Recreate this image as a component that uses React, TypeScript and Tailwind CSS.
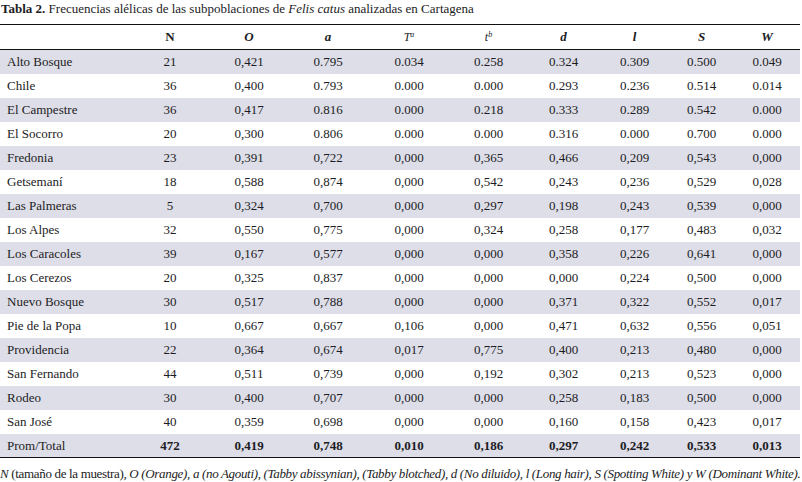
const rows: string[][] = [
  ["Alto Bosque", "21", "0,421", "0.795", "0.034", "0.258", "0.324", "0.309", "0.500", "0.049"],
  ["Chile", "36", "0,400", "0.793", "0.000", "0.000", "0.293", "0.236", "0.514", "0.014"],
  ["El Campestre", "36", "0,417", "0.816", "0.000", "0.218", "0.333", "0.289", "0.542", "0.000"],
  ["El Socorro", "20", "0,300", "0.806", "0.000", "0.000", "0.316", "0.000", "0.700", "0.000"],
  ["Fredonia", "23", "0,391", "0,722", "0,000", "0,365", "0,466", "0,209", "0,543", "0,000"],
  ["Getsemaní", "18", "0,588", "0,874", "0,000", "0,542", "0,243", "0,236", "0,529", "0,028"],
  ["Las Palmeras", "5", "0,324", "0,700", "0,000", "0,297", "0,198", "0,243", "0,539", "0,000"],
  ["Los Alpes", "32", "0,550", "0,775", "0,000", "0,324", "0,258", "0,177", "0,483", "0,032"],
  ["Los Caracoles", "39", "0,167", "0,577", "0,000", "0,000", "0,358", "0,226", "0,641", "0,000"],
  ["Los Cerezos", "20", "0,325", "0,837", "0,000", "0,000", "0,000", "0,224", "0,500", "0,000"],
  ["Nuevo Bosque", "30", "0,517", "0,788", "0,000", "0,000", "0,371", "0,322", "0,552", "0,017"],
  ["Pie de la Popa", "10", "0,667", "0,667", "0,106", "0,000", "0,471", "0,632", "0,556", "0,051"],
  ["Providencia", "22", "0,364", "0,674", "0,017", "0,775", "0,400", "0,213", "0,480", "0,000"],
  ["San Fernando", "44", "0,511", "0,739", "0,000", "0,192", "0,302", "0,213", "0,523", "0,000"],
  ["Rodeo", "30", "0,400", "0,707", "0,000", "0,000", "0,258", "0,183", "0,500", "0,000"],
  ["San José", "40", "0,359", "0,698", "0,000", "0,000", "0,160", "0,158", "0,423", "0,017"],
];

const total = ["Prom/Total", "472", "0,419", "0,748", "0,010", "0,186", "0,297", "0,242", "0,533", "0,013"];

const serif = "font-['Liberation_Serif',serif] text-[13px] text-[#1c1c24]";

export default function App() {
  return (
    <div className={"w-[802px] h-[482px] bg-white overflow-hidden " + serif}>
      <div className="h-[24px] leading-[18px] pl-[1px]">
        <span className="font-bold">Tabla 2.</span> Frecuencias alélicas de las subpoblaciones de{" "}
        <i>Felis catus</i> analizadas en Cartagena
      </div>
      <table className={"table-fixed w-[800px] border-collapse " + serif}>
        <colgroup>
          <col className="w-[130px]" />
          <col className="w-[80px]" />
          <col className="w-[78px]" />
          <col className="w-[80px]" />
          <col className="w-[82px]" />
          <col className="w-[77px]" />
          <col className="w-[73px]" />
          <col className="w-[69px]" />
          <col className="w-[65px]" />
          <col className="w-[66px]" />
        </colgroup>
        <thead>
          <tr className="h-[25px] border-t border-b border-[#111]">
            <th></th>
            <th className="font-bold text-center">N</th>
            <th className="font-bold italic text-center">O</th>
            <th className="font-bold italic text-center">a</th>
            <th className="font-normal italic text-center text-[12px]">
              T<sup className="text-[8px]">a</sup>
            </th>
            <th className="font-normal italic text-center text-[12px]">
              t<sup className="text-[8px]">b</sup>
            </th>
            <th className="font-bold italic text-center">d</th>
            <th className="font-bold italic text-center">l</th>
            <th className="font-bold italic text-center">S</th>
            <th className="font-bold italic text-center">W</th>
          </tr>
        </thead>
        <tbody>
          {rows.map((r, i) => (
            <tr key={r[0]} className={i % 2 === 0 ? "h-[24px] bg-[#dedee8]" : "h-[24px] bg-white"}>
              {r.map((c, j) => (
                <td key={j} className={j === 0 ? "pl-[7px] text-left" : "text-center"}>
                  {c}
                </td>
              ))}
            </tr>
          ))}
          <tr className="h-[24px] bg-[#dedee8] border-b border-[#111]">
            {total.map((c, j) => (
              <td key={j} className={j === 0 ? "pl-[7px] text-left" : "text-center font-bold"}>
                {c}
              </td>
            ))}
          </tr>
        </tbody>
      </table>
      <div className="mt-[6px] text-[13px] italic tracking-[-0.33px] whitespace-nowrap">
        N <span className="not-italic">(tamaño de la muestra)</span>, O (Orange), a (no Agouti),  (Tabby abissynian),  (Tabby blotched), d (No diluido), l (Long hair), S (Spotting White) y W (Dominant White).
      </div>
    </div>
  );
}
